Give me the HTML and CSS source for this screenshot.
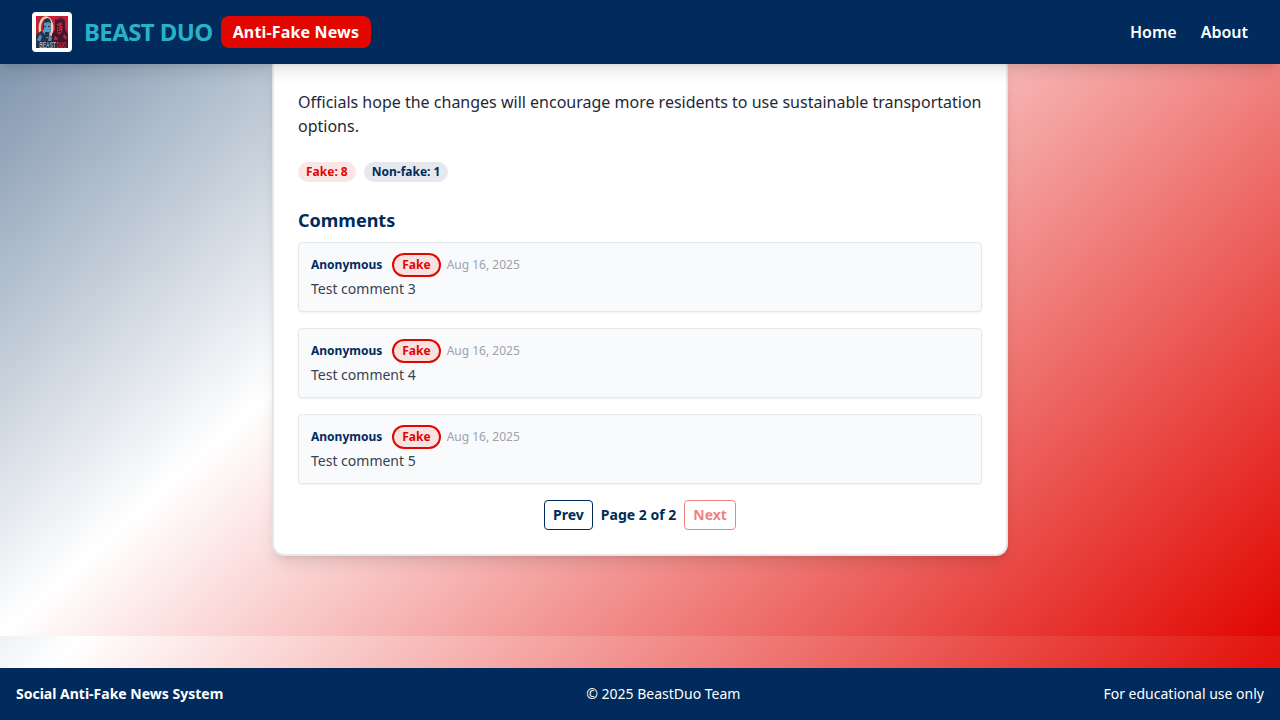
FILE: index.html
```html
<!DOCTYPE html>
<html lang="en">
<head>
<meta charset="utf-8">
<title>Beast Duo Anti-Fake News</title>
<link rel="stylesheet" href="styles.css">
</head>
<body>
<div class="page">
  <header class="navbar">
    <div class="brand">
      <svg class="logo" viewBox="0 0 32 32" aria-label="Beast Duo">
        <rect width="32" height="32" fill="#c4203a"/>
        <ellipse cx="10" cy="12" rx="6.3" ry="10.5" fill="#b5223a" stroke="#ecd2ac" stroke-width="2.4"/>
        <path d="M0 19l5-4 3 2 3 5 3-3 3 4v9H0z" fill="#23344f"/>
        <path d="M7 6q4-5 7 0l1 6-1 6-3 4-4-6z" fill="#4f9cc4"/>
        <path d="M7 8q1-6 5-6 3 1 3 6l-2-2-5 1v7l-1-1zM8 10h2v1H8zM12 10h2v1h-2zM9 16h4v5H9z" fill="#26344b"/>
        <path d="M19 3l2 1 4-3 4 4v8l3 5v14H16V18l3-4z" fill="#3b1830"/>
        <path d="M21 8l4-2 2 3-1 7-3 3-2-4zM28 18l3 3-1 3-3-3zM18 20l3 1 1 3h-4zM23 3l3-1-1 2z" fill="#b5223a"/>
        <path d="M21 10h2v1h-2zM25 9h2v1h-2zM22 15h3v1h-3zM22 12h1v2h-1z" fill="#281827"/>
        <path d="M1 24l3-6 2 3-2 5zM13 19l3 3-1 3h-3z" fill="#568eac"/>
        <path d="M3 25h16v7H3z" fill="#232c43"/>
        <path d="M19 25h11v7H19z" fill="#351a30"/>
        <g transform="translate(3.2 31.6) scale(.55 1)"><text class="logo-text" fill="#9bb0bb">BEAST</text></g>
        <g transform="translate(20.3 31.6) scale(.5 1)"><text class="logo-text" fill="#c9293d">DUO</text></g>
      </svg>
      <span class="brand-name">BEAST DUO</span>
      <span class="brand-tag">Anti-Fake News</span>
    </div>
    <nav class="links"><a>Home</a><a>About</a></nav>
  </header>
  <main class="main">
    <article class="card">
      <p class="body-text">Officials hope the changes will encourage more residents to use sustainable transportation options.</p>
      <div class="votes"><span class="vote vote-fake">Fake: 8</span><span class="vote vote-real">Non-fake: 1</span></div>
      <h2 class="heading">Comments</h2>
      <div class="comments">
        <div class="comment">
          <div class="meta"><span class="author">Anonymous</span><span class="badge">Fake</span><span class="date">Aug 16, 2025</span></div>
          <p class="comment-text">Test comment 3</p>
        </div>
        <div class="comment">
          <div class="meta"><span class="author">Anonymous</span><span class="badge">Fake</span><span class="date">Aug 16, 2025</span></div>
          <p class="comment-text">Test comment 4</p>
        </div>
        <div class="comment">
          <div class="meta"><span class="author">Anonymous</span><span class="badge">Fake</span><span class="date">Aug 16, 2025</span></div>
          <p class="comment-text">Test comment 5</p>
        </div>
      </div>
      <div class="pager"><button class="btn">Prev</button><span>Page 2 of 2</span><button class="btn btn-next" disabled>Next</button></div>
    </article>
  </main>
  <footer class="footer"><strong>Social Anti-Fake News System</strong><span>© 2025 BeastDuo Team</span><span>For educational use only</span></footer>
</div>
</body>
</html>
```
FILE: styles.css
```css
* { box-sizing: border-box; margin: 0; padding: 0; }
body { font-family: "Noto Sans", sans-serif; color: #1f2937; line-height: 24px; }
.page {
  height: 720px; overflow: hidden; display: flex; flex-direction: column;
  background: linear-gradient(to bottom right, #002b5c, #fff, #e10600) bottom / 100% 1300px no-repeat;
}
.navbar {
  height: 64px; flex: none; padding: 0 32px; display: flex; align-items: center; justify-content: space-between;
  background: #002b5c; z-index: 1;
  box-shadow: 0 10px 15px -3px rgba(0,0,0,.1), 0 4px 6px -4px rgba(0,0,0,.1);
}
.brand { display: flex; align-items: center; }
.logo { width: 40px; height: 40px; padding: 4px; background: #fff; border-radius: 4px; margin-right: 12px; }
.logo-text { font: bold 9px "Liberation Sans", sans-serif; }
.brand-name { color: #29b1c8; font-size: 24px; line-height: 32px; font-weight: 700; letter-spacing: -.6px; margin-right: 8px; }
.brand-tag { background: #e10600; color: #fff; font-weight: 700; letter-spacing: .16px; padding: 4px 12px; border-radius: 8px; }
.links { display: flex; gap: 24px; color: #fff; font-weight: 600; }
.main {
  height: 572px; flex: none; display: flex; justify-content: center; align-items: flex-start;
  background: linear-gradient(to bottom right, #002b5c, #fff, #e10600) bottom / 100% 1152px no-repeat;
}
.card {
  width: 736px; height: 492px; padding: 26px 24px 24px; background: #fff;
  border: 2px solid #e5e7eb; border-top: 0; border-radius: 0 0 12px 12px;
  box-shadow: 0 10px 15px -3px rgba(0,0,0,.1), 0 4px 6px -4px rgba(0,0,0,.1);
}
.votes { display: flex; gap: 8px; margin: 24px 0; font-size: 12px; line-height: 16px; font-weight: 700; }
.vote { padding: 2px 8px; border-radius: 99px; }
.vote-fake { color: #e10600; background: #fce6e5; }
.vote-real { color: #002b5c; background: #e5e9ee; }
.heading { color: #002b5c; font-size: 18px; line-height: 28px; margin-bottom: 8px; }
.comments { display: flex; flex-direction: column; gap: 16px; }
.comment {
  height: 70px; padding: 10px 12px; border: 1px solid #e5e7eb; border-radius: 4px; background: #f9fafb;
  box-shadow: 0 1px 2px rgba(0,0,0,.05);
}
.meta { display: flex; align-items: center; font-size: 12px; line-height: 16px; }
.author { color: #002b5c; font-weight: 700; margin-right: 10px; }
.badge { color: #e10600; font-weight: 700; background: #f7e1e1; border: 2px solid #e10600; border-radius: 99px; padding: 2px 8px; margin-right: 6px; }
.date { color: #9ca3af; }
.comment-text { color: #374151; font-size: 14px; line-height: 20px; margin-top: 2px; }
.pager { display: flex; justify-content: center; align-items: center; gap: 8px; margin-top: 16px; color: #002b5c; font-size: 14px; line-height: 20px; font-weight: 700; }
.btn { font: inherit; color: #002b5c; background: #fff; border: 1px solid #002b5c; border-radius: 4px; padding: 4px 8px; }
.btn-next { color: #e10600; border-color: #e10600; opacity: .5; }
.footer {
  height: 52px; flex: none; margin-top: 32px; padding: 0 16px; display: flex; align-items: center; justify-content: space-between;
  background: #002b5c; color: #fff; font-size: 14px; line-height: 20px;
}
```
